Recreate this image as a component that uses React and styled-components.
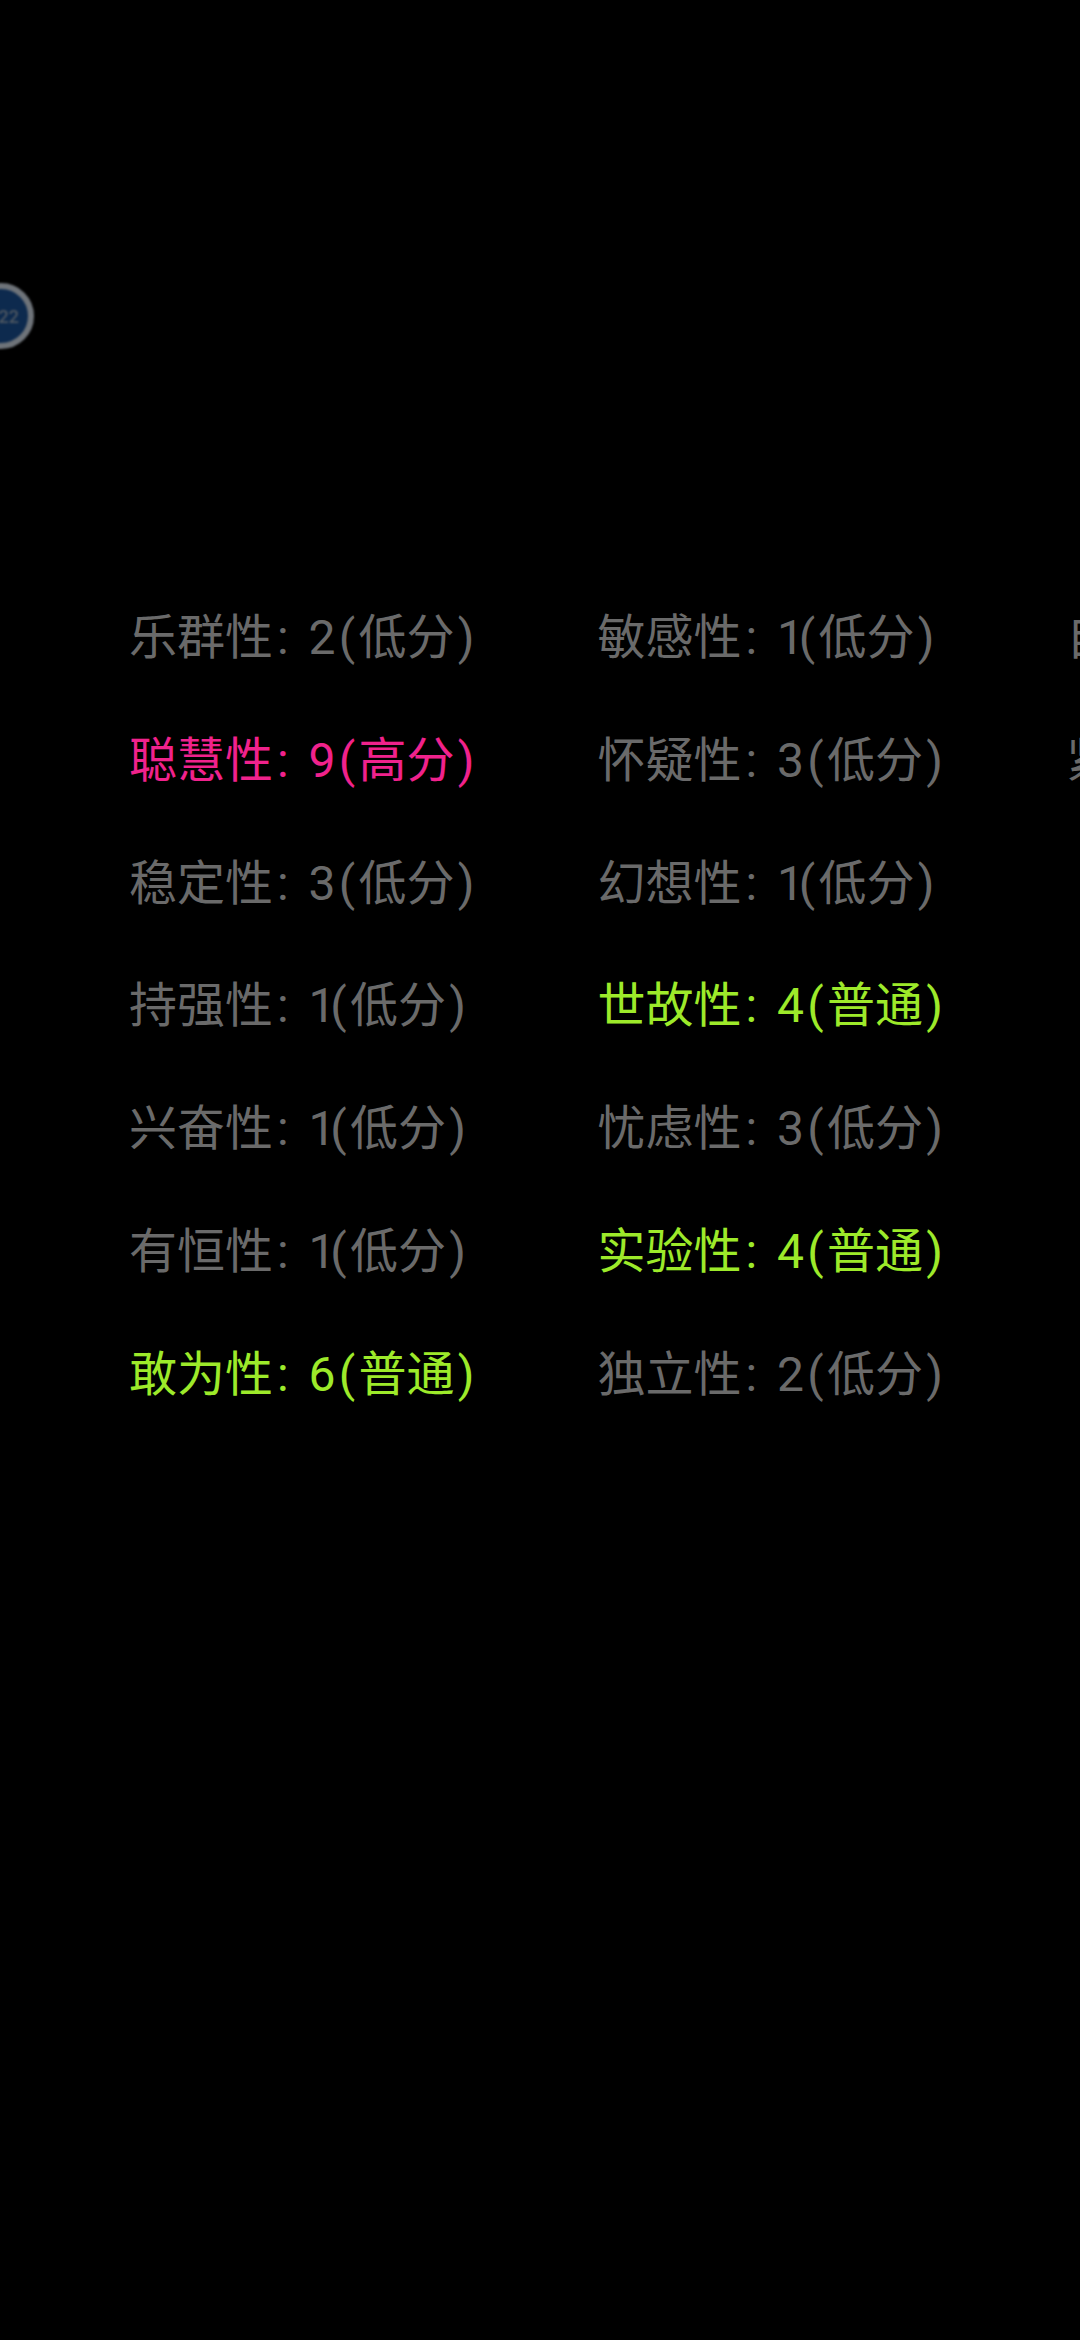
import React from 'react';
import styled, { createGlobalStyle } from 'styled-components';

const GlobalStyle = createGlobalStyle`
  html, body {
    margin: 0;
    padding: 0;
    background: #000;
    overflow: hidden;
  }
`;

const Screen = styled.div`
  position: relative;
  width: 1080px;
  height: 2340px;
  background: #000;
  overflow: hidden;
  font-family: Roboto, "Noto Sans CJK SC", sans-serif;
`;

const Badge = styled.div`
  position: absolute;
  left: -32px;
  top: 283px;
  width: 66px;
  height: 66px;
  box-sizing: border-box;
  border: 6px solid #6e7379;
  border-radius: 50%;
  background: #0d2a4e;
  display: flex;
  align-items: center;
  justify-content: flex-end;
  padding-right: 9px;
  color: #4f5862;
  font-size: 18px;
  font-weight: 500;
  filter: blur(1px);
`;

const Grid = styled.div`
  display: grid;
  grid-template-columns: repeat(3, 468.5px);
  grid-auto-flow: column;
  grid-template-rows: repeat(7, 122.8px);
  padding: 607px 0 0 129px;
  width: 1600px;
`;

const Trait = styled.div`
  font-size: 48px;
  line-height: 62px;
  white-space: nowrap;
  color: ${(props) => props.$color};
`;

const Colon = styled.span`
  display: inline-block;
  width: 31.5px;
  padding-left: 4px;
`;

const Score = styled.span`
  letter-spacing: ${(props) => (props.$value === 1 ? -8.5 : 0)}px;
`;

const Paren = styled.span`
  margin: 0 3.25px;
`;

const LEVEL_COLORS = {
  低分: '#6a6a6a',
  普通: '#9dea2a',
  高分: '#f0228c',
};

const traits = [
  ['乐群性', 2, '低分'],
  ['聪慧性', 9, '高分'],
  ['稳定性', 3, '低分'],
  ['持强性', 1, '低分'],
  ['兴奋性', 1, '低分'],
  ['有恒性', 1, '低分'],
  ['敢为性', 6, '普通'],
  ['敏感性', 1, '低分'],
  ['怀疑性', 3, '低分'],
  ['幻想性', 1, '低分'],
  ['世故性', 4, '普通'],
  ['忧虑性', 3, '低分'],
  ['实验性', 4, '普通'],
  ['独立性', 2, '低分'],
  ['自律性', 3, '低分'],
  ['紧张性', 3, '低分'],
];

const App = () => (
  <Screen>
    <GlobalStyle />
    <Badge>22</Badge>
    <Grid>
      {traits.map(([name, score, level]) => (
        <Trait key={name} $color={LEVEL_COLORS[level]}>
          {name}
          <Colon>:</Colon>
          <Score $value={score}>{score}</Score>
          <Paren>(</Paren>
          {level}
          <Paren>)</Paren>
        </Trait>
      ))}
    </Grid>
  </Screen>
);

export default App;
